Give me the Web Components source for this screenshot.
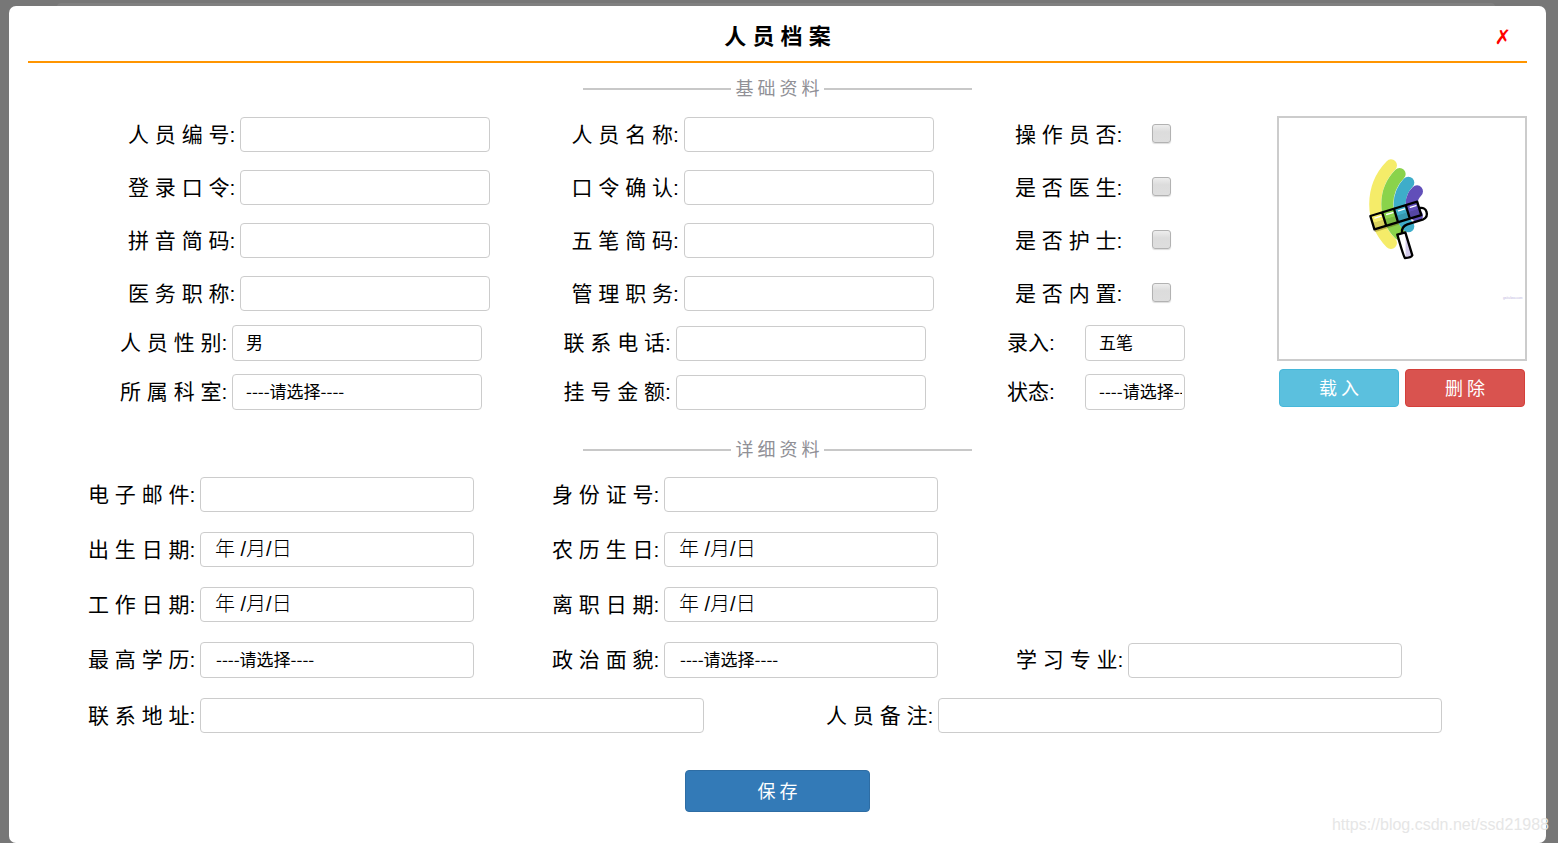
<!DOCTYPE html>
<html lang="zh-CN">
<head>
<meta charset="utf-8">
<title>人员档案</title>
<style>
  html, body { margin: 0; min-height: 100vh; }
  body { background: #777; color: #000; font-family: "Liberation Sans", "Noto Sans CJK SC", sans-serif; box-sizing: border-box; }
</style>
</head>
<body>
<archive-page></archive-page>
<script>
const BASE = `<style>*, *::before, *::after { box-sizing: border-box; }</style>`;

function render(host, html) {
  host.attachShadow({ mode: 'open' }).innerHTML = BASE + html;
}

class ArchiveDialog extends HTMLElement {
  connectedCallback() {
    render(this, `
      <style>
        :host { display: block; min-height: calc(100vh - 6px); padding: 0 19px 31px; border-radius: 7px; background: #fff; }
        header { display: grid; grid-template-columns: 1fr auto 1fr; align-items: center; height: 57px; padding-top: 7px; border-bottom: 2px solid #ff9500; }
        h1 { grid-column: 2; margin: 0; font-size: 22px; line-height: 30px; font-weight: 700; }
        button { justify-self: end; margin-right: 15px; padding: 0; width: 18px; border: 0; background: none; color: #f00; font: 20px/32px "DejaVu Sans", sans-serif; cursor: pointer; }
      </style>
      <header><h1>${this.getAttribute('heading')}</h1><button type="button" aria-label="关闭">✗</button></header>
      <slot></slot>`);
  }
}

class SectionTitle extends HTMLElement {
  connectedCallback() {
    render(this, `
      <style>
        :host { display: flex; align-items: center; justify-content: center; gap: 4px; height: 24px; }
        h2 { margin: 0; padding-bottom: 2px; color: #909096; font: 400 18px/24px "Noto Sans CJK SC", sans-serif; }
        i { width: 148px; height: 2px; margin-top: 2px; background: #c8c8c8; }
      </style>
      <i></i><h2><slot></slot></h2><i></i>`);
  }
}

class FormField extends HTMLElement {
  connectedCallback() {
    const kind = this.getAttribute('kind') || 'text';
    const value = this.getAttribute('value') || '';
    const controls = {
      text: `<input id="control" type="text">`,
      password: `<input id="control" type="password">`,
      date: `<input id="control" class="date" type="text" value="${value}">`,
      select: `<select id="control"><option>${value}</option></select>`,
      check: `<input id="control" type="checkbox">`
    };
    render(this, `
      <style>
        :host { display: flex; align-items: center; gap: var(--field-gap, 4px); min-width: 0; }
        label { flex: none; min-width: var(--label-width, 108px); font-size: 21px; line-height: 30px; white-space: nowrap; }
        input, select { appearance: none; margin: 0; width: var(--control-width, 250px); min-width: 0; height: 35px; padding: 0 2px 3px var(--control-indent, 13px); border: 1px solid #ccc; border-radius: 4px; background: #fff; color: #000; font: 17px "Noto Sans CJK SC", sans-serif; }
        select { height: 36px; overflow: hidden; }
        .date { padding: 0 2px 4px 14px; font: 300 20px "Liberation Sans", "Noto Sans CJK SC", sans-serif; }
        input[type=checkbox] { flex: none; width: 19px; height: 19px; margin-bottom: 2px; padding: 0; border: 1px solid #b2b2b2; border-radius: 3px; background: linear-gradient(#ededed, #dcdcdc 40%, #dedede); box-shadow: 0 1px 1px #ddd; }
        input[type=checkbox]:checked { background: #337ab7; }
      </style>
      <label for="control">${this.getAttribute('label')}:</label>${controls[kind]}`);
  }
}

class ActionButton extends HTMLElement {
  connectedCallback() {
    render(this, `
      <style>
        :host { display: block; }
        button { display: block; width: 100%; height: var(--button-height, 38px); padding: 0 0 2px; border: 1px solid; border-radius: 4px; color: #fff; font: 18px/24px "Noto Sans CJK SC", sans-serif; cursor: pointer; }
        :host([tone=info]) button { background: #5bc0de; border-color: #46b8da; }
        :host([tone=danger]) button { background: #d9534f; border-color: #d43f3a; }
        :host([tone=primary]) button { background: #337ab7; border-color: #2e6da4; }
      </style>
      <button type="button"><slot></slot></button>`);
  }
}

class PhotoCard extends HTMLElement {
  connectedCallback() {
    render(this, `
      <style>
        :host { display: block; width: 250px; }
        figure { margin: 0 0 8px; height: 245px; border: 2px solid #ccc; }
        svg { display: block; width: 100%; height: 100%; }
        div { display: grid; grid-template-columns: 1fr 1fr; gap: 6px; padding: 0 2px; }
      </style>
      <figure>
        <svg viewBox="0 0 246 241" role="img" aria-label="照片">
          <defs>
            <linearGradient id="shade" x1="0" y1="0" x2="0" y2="1"><stop offset=".5" stop-color="#000" stop-opacity="0"/><stop offset=".55" stop-color="#000" stop-opacity=".12"/></linearGradient>
            <linearGradient id="grip"><stop offset=".5" stop-color="#fff"/><stop offset=".6" stop-color="#d3cbea"/></linearGradient>
          </defs>
          <g transform="translate(81 32) scale(.3333)" fill="none" stroke-linecap="round" stroke-linejoin="round">
            <g stroke-width="36">
              <path stroke="#f5ec69" d="M93 46A167 167 0 0 0 93 279"/>
              <path stroke="#8ad34b" d="M119 72A129 129 0 0 0 119 253"/>
              <path stroke="#3eadc9" d="M145 98A95 95 0 0 0 145 229"/>
              <path stroke="#614fb9" d="M171 124A50 50 0 0 0 171 197"/>
            </g>
            <path stroke="#574400" stroke-opacity=".35" stroke-width="6" d="M46 243L116 221"/>
            <g transform="translate(31 198) rotate(-17)">
              <path fill="#f5ec69" d="M0 0H37V42H0z"/><path fill="#8ad34b" d="M37 0H74V42H37z"/>
              <path fill="#3eadc9" d="M74 0H111V42H74z"/><path fill="#614fb9" d="M111 0H147V42H111z"/>
              <path fill="url(#shade)" d="M0 0H147V42H0z"/>
              <path stroke="#fff" stroke-width="4" d="M11 10H31M48 10H68M85 10H105M122 10H140"/>
              <path stroke="#000" stroke-width="7" d="M0 0H147V42H0zM37 0V42M74 0V42M111 0V42"/>
            </g>
            <path stroke="#000" stroke-width="7" d="M180 174C200 170 209 198 190 208L142 223Q124 230 126 248"/>
            <path fill="url(#grip)" stroke="#000" stroke-width="7" d="M112 254L136 247 157 316Q153 324 135 324 131 321 112 254z"/>
          </g>
          <text x="224" y="181" font-size="3" font-weight="700" fill="#cfcae8" font-family="Liberation Sans, sans-serif">gaitubao.com</text>
        </svg>
      </figure>
      <div>
        <action-button tone="info">载 入</action-button>
        <action-button tone="danger">删 除</action-button>
      </div>`);
  }
}

class ArchivePage extends HTMLElement {
  connectedCallback() {
    render(this, `
      <style>
        :host { display: block; position: relative; padding: 6px 12px 0 9px; }
        .behind { position: absolute; top: 3px; left: 57px; right: 63px; height: 10px; border-radius: 4px 4px 0 0; background: #808080; }
        archive-dialog { position: relative; }
        .first { margin-top: 13px; }
        .basic { display: flex; margin-top: 16px; }
        .fields { flex: 1; padding: 1px 0 0 92px; }
        .grid { display: grid; grid-template-columns: 23fr 23fr 14fr; align-items: center; }
        .upper { row-gap: 18px; grid-auto-rows: 35px; }
        .upper form-field { padding-left: 8px; }
        .lower { row-gap: 13px; grid-auto-rows: 36px; margin-top: 14px; }
        .check { --field-gap: 29px; }
        .short { --field-gap: 29px; --label-width: 49px; --control-width: 100px; }
        .second { margin-top: 27px; }
        .details { display: grid; row-gap: 20px; margin-top: 16px; padding-left: 60px; --control-width: 100%; --control-indent: 15px; }
        .row { display: grid; grid-template-columns: repeat(3, 1fr); column-gap: 78px; padding-right: 125px; align-items: center; }
        .wide { grid-template-columns: 1fr 1fr; column-gap: 122px; padding-right: 85px; }
        .save { width: 185px; margin: 37px auto 0; --button-height: 42px; }
        .mark { position: absolute; right: 9px; bottom: 8px; color: #e6e6e6; font-size: 16px; line-height: 20px; }
      </style>
      <div class="behind"></div>
      <archive-dialog heading="人 员 档 案">
        <section-title class="first">基 础 资 料</section-title>
        <div class="basic">
          <div class="fields">
            <div class="grid upper">
              <form-field label="人 员 编 号"></form-field>
              <form-field label="人 员 名 称"></form-field>
              <form-field class="check" kind="check" label="操 作 员 否"></form-field>
              <form-field kind="password" label="登 录 口 令"></form-field>
              <form-field kind="password" label="口 令 确 认"></form-field>
              <form-field class="check" kind="check" label="是 否 医 生"></form-field>
              <form-field label="拼 音 简 码"></form-field>
              <form-field label="五 笔 简 码"></form-field>
              <form-field class="check" kind="check" label="是 否 护 士"></form-field>
              <form-field label="医 务 职 称"></form-field>
              <form-field label="管 理 职 务"></form-field>
              <form-field class="check" kind="check" label="是 否 内 置"></form-field>
            </div>
            <div class="grid lower">
              <form-field kind="select" label="人 员 性 别" value="男"></form-field>
              <form-field label="联 系 电 话"></form-field>
              <form-field class="short" kind="select" label="录入" value="五笔"></form-field>
              <form-field kind="select" label="所 属 科 室" value="----请选择----"></form-field>
              <form-field label="挂 号 金 额"></form-field>
              <form-field class="short" kind="select" label="状态" value="----请选择----"></form-field>
            </div>
          </div>
          <photo-card></photo-card>
        </div>
        <section-title class="second">详 细 资 料</section-title>
        <div class="details">
          <div class="row">
            <form-field label="电 子 邮 件"></form-field>
            <form-field label="身 份 证 号"></form-field>
          </div>
          <div class="row">
            <form-field kind="date" label="出 生 日 期" value="年 /月/日"></form-field>
            <form-field kind="date" label="农 历 生 日" value="年 /月/日"></form-field>
          </div>
          <div class="row">
            <form-field kind="date" label="工 作 日 期" value="年 /月/日"></form-field>
            <form-field kind="date" label="离 职 日 期" value="年 /月/日"></form-field>
          </div>
          <div class="row">
            <form-field kind="select" label="最 高 学 历" value="----请选择----"></form-field>
            <form-field kind="select" label="政 治 面 貌" value="----请选择----"></form-field>
            <form-field label="学 习 专 业"></form-field>
          </div>
          <div class="row wide">
            <form-field label="联 系 地 址"></form-field>
            <form-field label="人 员 备 注"></form-field>
          </div>
        </div>
        <action-button class="save" tone="primary">保 存</action-button>
      </archive-dialog>
      <span class="mark">https://blog.csdn.net/ssd21988</span>`);
  }
}

customElements.define('section-title', SectionTitle);
customElements.define('form-field', FormField);
customElements.define('action-button', ActionButton);
customElements.define('photo-card', PhotoCard);
customElements.define('archive-dialog', ArchiveDialog);
customElements.define('archive-page', ArchivePage);
</script>
</body>
</html>
